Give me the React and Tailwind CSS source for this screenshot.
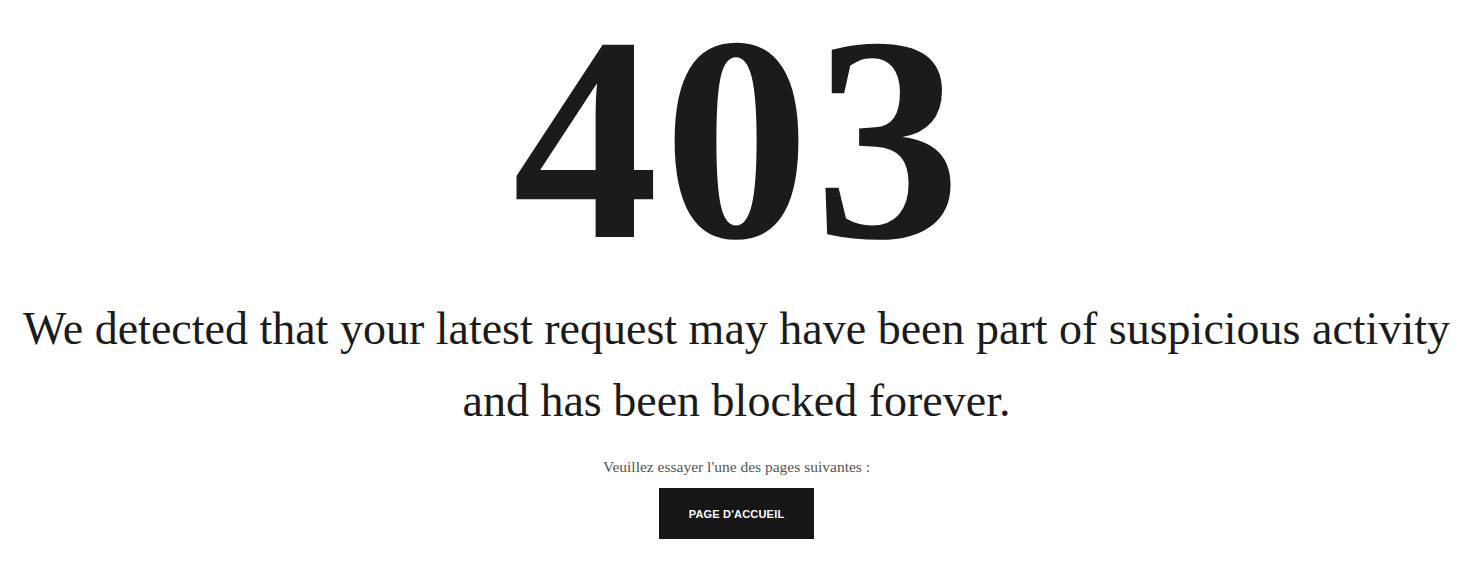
import React from "react";

const App = () => {
  return (
    <div className="min-h-screen bg-white flex flex-col items-center text-center" style={{ fontFamily: '"Liberation Serif", serif' }}>
      <h1 className="text-[292px] leading-[278px] font-bold text-[#1b1b1b] tracking-[5px] pl-[5px]">403</h1>
      <p className="text-[46px] leading-[72px] text-[#1b1b1b] mt-[15px]">
        We detected that your latest request may have been part of suspicious activity and has been blocked forever.
      </p>
      <p className="text-[15.5px] text-[#555] mt-[18px]">Veuillez essayer l'une des pages suivantes :</p>
      <a
        href="#"
        className="mt-[10px] w-[155px] h-[51px] bg-[#161616] text-white flex items-center justify-center text-[11px] font-bold tracking-[0.2px]"
        style={{ fontFamily: '"Liberation Sans", Arial, sans-serif' }}
      >
        PAGE D'ACCUEIL
      </a>
    </div>
  );
};

export default App;
